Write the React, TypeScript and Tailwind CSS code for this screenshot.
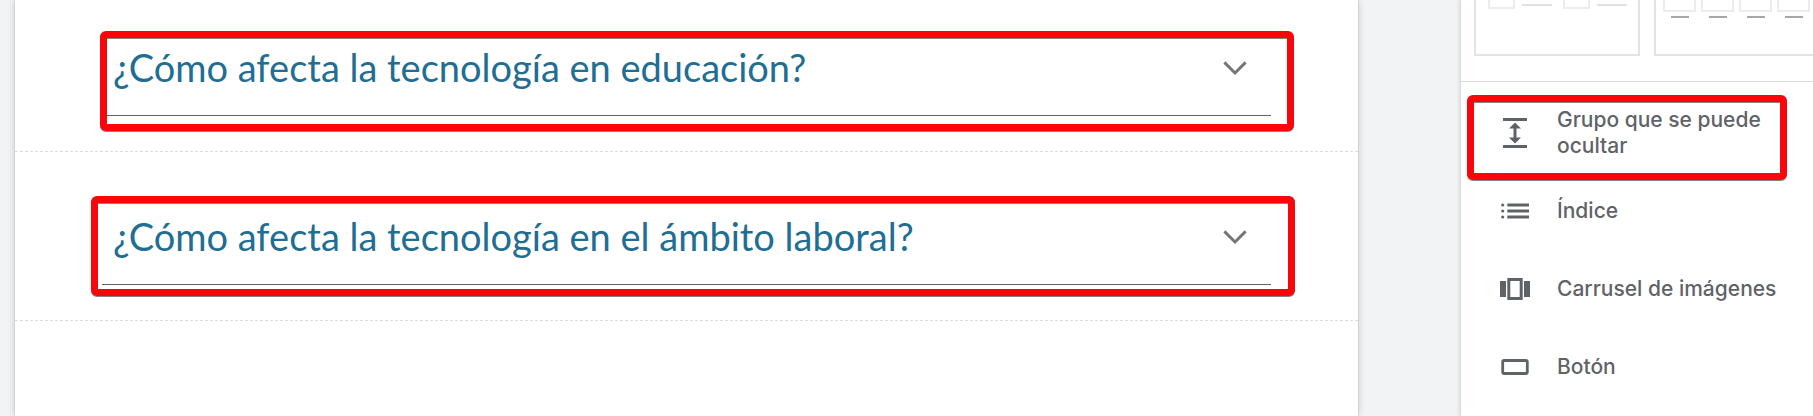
import { useState } from "react";
import type { ReactNode } from "react";
import clsx from "clsx";

interface CollapsibleProps {
  title: string;
  className?: string;
  markClassName: string;
}

interface InsertItemProps {
  label: string;
  icon: ReactNode;
  marked?: boolean;
}

// red frame drawn over whatever it highlights
const Mark = ({ className }: { className: string }) => {
  return (
    <div
      className={clsx(
        "pointer-events-none absolute rounded-md border-[7px] border-[#fa0509] drop-shadow-[0_1px_0_#858585]",
        className
      )}
    />
  );
};

const Collapsible = ({ title, className, markClassName }: CollapsibleProps) => {
  const [open, setOpen] = useState(false);

  return (
    <section
      className={clsx(
        "relative border-b border-dashed border-[#dadce0] px-[87px] pb-[35px]",
        className
      )}
    >
      <h2 className="border-b border-[#5f6368] pb-5">
        <button
          type="button"
          aria-expanded={open}
          onClick={() => setOpen(!open)}
          className="flex w-full items-center justify-between pl-[11px] pr-3 text-left text-[38px] leading-[56px] text-[#226e93]"
        >
          {title}
          <svg
            viewBox="0 0 24 24"
            className="size-12 shrink-0 fill-none stroke-[#757575]"
          >
            <path d="M6.700 9.700 12 15l5.300-5.300" strokeWidth="1.450" />
          </svg>
        </button>
      </h2>
      <Mark className={markClassName} />
    </section>
  );
};

const InsertItem = ({ label, icon, marked }: InsertItemProps) => {
  return (
    <li className="relative">
      <button
        type="button"
        className="flex h-[78px] w-full items-center gap-6 pl-9 pr-8 text-left text-[21px] leading-[26px] font-medium text-[#5f6368]"
      >
        <svg viewBox="0 0 36 36" className="size-9 shrink-0 fill-[#5f6368]">
          {icon}
        </svg>
        {label}
      </button>
      {marked && <Mark className="top-px left-1.5 right-[26px] h-[85px]" />}
    </li>
  );
};

const Layouts = () => {
  return (
    <div className="flex gap-3.5 overflow-hidden border-b border-[#dadce0] pb-[25px] pl-[13px]">
      <div className="flex h-14 w-[166px] shrink-0 gap-[7px] border-2 border-t-0 border-[#e3e4e6] pl-3">
        <div className="h-[9px] w-[27px] border-2 border-t-0 border-[#ececec]" />
        <div className="mt-1 h-0.5 w-[30px] bg-[#e0e0e0]" />
        <div className="ml-1 h-[9px] w-[27px] border-2 border-t-0 border-[#ececec]" />
        <div className="mt-1 h-0.5 w-[30px] bg-[#e0e0e0]" />
      </div>
      <div className="flex h-14 w-[166px] shrink-0 gap-[5px] border-2 border-t-0 border-[#e3e4e6] pl-[7px]">
        {[0, 1, 2, 3].map((i) => (
          <div key={i} className="w-[33px] shrink-0">
            <div className="h-3 border-2 border-t-0 border-[#ececec]" />
            <div className="mx-auto mt-1 h-0.5 w-[18px] bg-[#a6a6a6]" />
          </div>
        ))}
      </div>
    </div>
  );
};

export default function App() {
  return (
    <div className="flex min-h-screen overflow-hidden bg-[#f1f3f4]">
      <main className="ml-[15px] mr-[102px] min-w-0 flex-1 bg-white font-['Lato',sans-serif] shadow-[0_0_1px_#9aa0a6,0_0_7px_rgba(60,64,67,0.25)]">
        <Collapsible
          title="¿Cómo afecta la tecnología en educación?"
          className="pt-[39px]"
          markClassName="top-[31px] left-[85px] right-16 h-[100px]"
        />
        <Collapsible
          title="¿Cómo afecta la tecnología en el ámbito laboral?"
          className="pt-14"
          markClassName="top-11 left-[76px] right-[63px] h-[100px]"
        />
      </main>

      <aside className="w-[353px] shrink-0 border-l border-[#dadce0] bg-white font-['Inter',sans-serif] shadow-[0_0_4px_rgba(60,64,67,0.2)]">
        <Layouts />
        <ul className="pt-3">
          <InsertItem
            label="Grupo que se puede ocultar"
            marked
            icon={
              <path d="M6 3h24v3H6zM6 30h24v3H6zM19.5 13.5H24l-6-6-6 6h4.5v9H12l6 6 6-6h-4.500z" />
            }
          />
          <InsertItem
            label="Índice"
            icon={
              <>
                <circle cx="5.700" cy="12" r="1.600" />
                <circle cx="5.700" cy="18" r="1.600" />
                <circle cx="5.700" cy="24" r="1.600" />
                <path d="M10.300 10.600H32v2.800H10.300zM10.300 16.600H32v2.800H10.300zM10.300 22.600H32v2.800H10.300z" />
              </>
            }
          />
          <InsertItem
            label="Carrusel de imágenes"
            icon={
              <path
                fillRule="evenodd"
                d="M3 10h6v16H3zM27 10h6v16h-6zM10.300 7h15.400v22H10.300zM13.300 10v16h9.400V10z"
              />
            }
          />
          <InsertItem
            label="Botón"
            icon={
              <rect
                x="5.700"
                y="11.500"
                width="24.600"
                height="13"
                rx="1.500"
                fill="none"
                stroke="#5f6368"
                strokeWidth="2.800"
              />
            }
          />
        </ul>
      </aside>
    </div>
  );
}
